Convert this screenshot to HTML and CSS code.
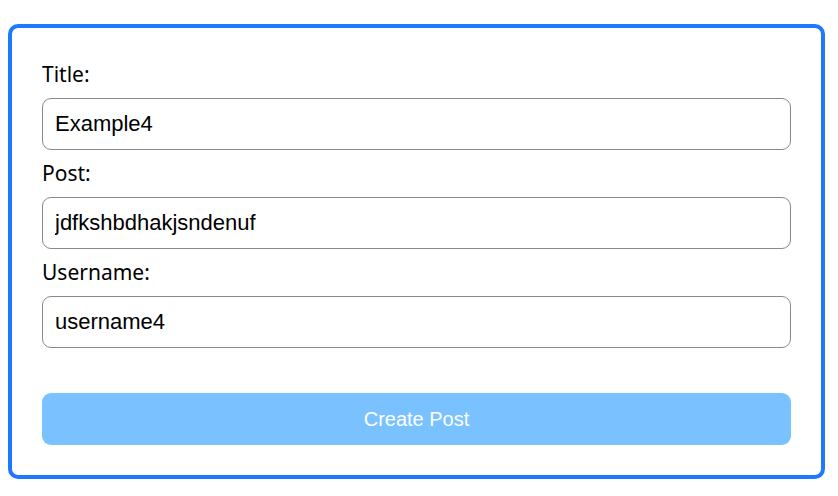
FILE: index.html
```html
<!DOCTYPE html>
<html>
<head>
<meta charset="utf-8">
<link rel="stylesheet" href="styles.css">
</head>
<body>
<form class="card">
  <div class="field">
    <label class="label">Title:</label>
    <input class="input" type="text" value="Example4">
  </div>
  <div class="field">
    <label class="label">Post:</label>
    <input class="input" type="text" value="jdfkshbdhakjsndenuf">
  </div>
  <div class="field">
    <label class="label">Username:</label>
    <input class="input" type="text" value="username4">
  </div>
  <button class="btn" type="button">Create Post</button>
</form>
</body>
</html>
```
FILE: styles.css
```css
html, body { margin: 0; padding: 0; background: #fff; }
body { padding: 24px 12px 0 8px; }
.card {
  border: 4px solid #1e79ff;
  border-radius: 10px;
  padding: 30px;
  display: flex;
  flex-direction: column;
  width: 749px;
}
.field { display: flex; flex-direction: column; margin-bottom: 7px; }
.label {
  font-family: "Noto Sans", sans-serif;
  font-size: 21px;
  color: #000;
  line-height: 27px;
  margin-top: 3px;
  margin-bottom: 10px;
}
.input {
  box-sizing: border-box;
  height: 52px;
  border: 1px solid #8a8a8a;
  border-radius: 9px;
  padding: 0 12px;
  font-family: "Liberation Sans", Arial, sans-serif;
  font-size: 22px;
  color: #000;
  outline: none;
}
.btn {
  margin-top: 38px;
  height: 52px;
  border: none;
  border-radius: 9px;
  background: #7ac2ff;
  color: #fff;
  font-family: "Liberation Sans", Arial, sans-serif;
  font-size: 20px;
}
```
